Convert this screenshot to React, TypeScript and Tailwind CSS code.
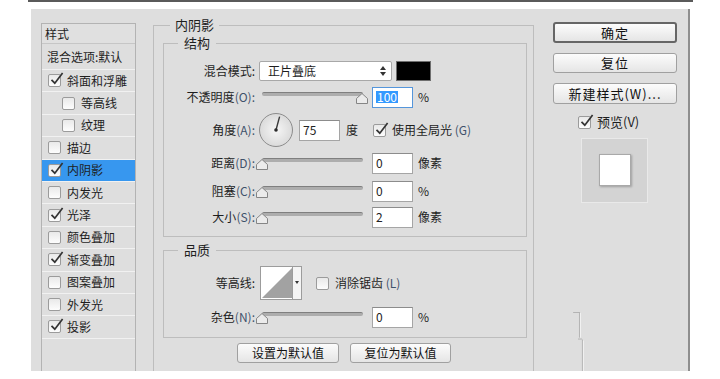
import React from 'react'

const ui = "font-['Noto_Sans_CJK_SC','Noto_Sans',sans-serif]"

function Box({ on }: { on?: boolean }) {
  return (
    <span className="relative block w-[13px] h-[13px] shrink-0 rounded-[2px] border border-[#9b9b9b] bg-linear-to-b from-[#e9e9e9] to-[#fdfdfd]">
      {on && (
        <svg className="absolute left-[1px] top-[-3px]" width="14" height="14" viewBox="0 0 14 14">
          <path d="M1.5 7.8 L4.8 11.2 L12.6 1" fill="none" stroke="#333" strokeWidth="1.7" />
        </svg>
      )}
    </span>
  )
}

function Slider({ full }: { full?: boolean }) {
  return (
    <div className="relative w-[114px] h-[14px] shrink-0">
      <div className="absolute left-[6px] top-[2px] w-[101px] h-[4px] rounded-full bg-[#adadad] border-t border-[#7f7f7f]" />
      <svg
        className={`absolute top-[3px] ${full ? 'left-[100px]' : 'left-0'}`}
        width="12"
        height="11"
        viewBox="0 0 12 11"
      >
        <path d="M0.5 10.5 V5.5 L6 0.5 L11.5 5.5 V10.5 Z" fill="#ebebeb" stroke="#858585" />
      </svg>
    </div>
  )
}

function Num({ children, focus }: { children: React.ReactNode; focus?: boolean }) {
  return (
    <div
      className={`w-[41px] h-[21px] shrink-0 bg-white border flex items-center px-[3px] text-[12px] text-[#222] ${
        focus ? 'border-[#5596db]' : 'border-[#a5a5a5] border-t-[#8c8c8c]'
      }`}
    >
      {children}
    </div>
  )
}

function Label({ t, k }: { t: string; k?: string }) {
  return (
    <div className="w-[91px] shrink-0 text-right whitespace-nowrap">
      {t}
      {k ? <span className="text-[#3e526b]">({k}):</span> : ':'}
    </div>
  )
}

function Btn({ children, main, className }: { children: React.ReactNode; main?: boolean; className: string }) {
  return (
    <div
      className={`flex items-center justify-center rounded-[3px] bg-linear-to-b from-[#fcfcfc] to-[#e5e5e5] text-[#111] ${
        main ? 'border-2 border-[#666]' : 'border border-[#a0a0a0]'
      } ${className}`}
    >
      {children}
    </div>
  )
}

const layers = [
  { t: '斜面和浮雕', on: true },
  { t: '等高线', indent: true },
  { t: '纹理', indent: true },
  { t: '描边' },
  { t: '内阴影', on: true, sel: true },
  { t: '内发光' },
  { t: '光泽', on: true },
  { t: '颜色叠加' },
  { t: '渐变叠加', on: true },
  { t: '图案叠加' },
  { t: '外发光' },
  { t: '投影', on: true },
]

export default function App() {
  return (
    <div className={`w-[720px] h-[379px] bg-white overflow-hidden text-[12px] text-[#1e1e1e] ${ui}`}>
      <div className="ml-[28px] w-[665px] h-[2px] bg-[#5a5a5a]" />

      <div className="ml-[31px] mt-[7px] w-[659px] h-[362px] bg-[#dedede] border-r-2 border-[#8e8e8e] overflow-hidden flex">
        {/* style list */}
        <div className="ml-[10px] mt-[14px] w-[95px] h-[360px] shrink-0 border border-[#b3b3b3]">
          <div className="h-[20px] flex items-center pl-[3px] border-b border-[#c6c6c6] bg-[#e0e0e0]">样式</div>
          <div className="h-[26px] flex items-center pl-[5px] border-b border-[#f1f1f1] whitespace-nowrap">
            混合选项:默认
          </div>
          {layers.map(l => (
            <div
              key={l.t}
              className={`h-[22.4px] flex items-center gap-[6px] border-b border-[#f1f1f1] ${
                l.indent ? 'pl-[20px]' : 'pl-[6px]'
              } ${l.sel ? 'bg-[#3797ef]' : ''}`}
            >
              <Box on={l.on} />
              <span>{l.t}</span>
            </div>
          ))}
        </div>

        {/* main settings */}
        <fieldset className="ml-[17px] mt-[8px] w-[381px] h-[370px] shrink-0 border border-[#bdbdbd] pl-[9px]">
          <legend className="ml-[7px] px-[5px] text-[13px] leading-[16px]">内阴影</legend>

          <fieldset className="mt-[2px] w-[364px] border border-[#bdbdbd] pb-[8px]">
            <legend className="ml-[14px] px-[6px] text-[13px] leading-[16px]">结构</legend>

            <div className="flex items-center h-[22px] mt-[9px]">
              <Label t="混合模式" />
              <div className="ml-[4px] w-[133px] h-[20px] bg-white border border-[#a8a8a8] rounded-[2px] flex items-center justify-between pl-[8px] pr-[5px]">
                <span>正片叠底</span>
                <svg width="6" height="10" viewBox="0 0 6 10">
                  <path d="M3 0 L6 4 L0 4 Z M0 6 L6 6 L3 10 Z" fill="#333" />
                </svg>
              </div>
              <div className="ml-[4px] w-[35px] h-[20px] bg-black border border-[#6e6e6e]" />
            </div>

            <div className="flex items-center h-[22px] mt-[4px]">
              <Label t="不透明度" k="O" />
              <div className="ml-[1px]">
                <Slider full />
              </div>
              <div className="ml-[2px]">
                <Num focus>
                  <span className="bg-[#3399ff] text-white px-[1px] leading-[12px]">100</span>
                </Num>
              </div>
              <span className="ml-[5px]">%</span>
            </div>

            <div className="flex items-center h-[36px] mt-[4px]">
              <Label t="角度" k="A" />
              <svg className="ml-[3px] shrink-0" width="36" height="36" viewBox="0 0 36 36">
                <defs>
                  <radialGradient id="dial" cx="50%" cy="50%" r="50%">
                    <stop offset="0%" stopColor="#f6f6f6" />
                    <stop offset="100%" stopColor="#dadada" />
                  </radialGradient>
                </defs>
                <circle cx="18" cy="18" r="16.5" fill="url(#dial)" stroke="#8c8c8c" />
                <line x1="18" y1="18" x2="21.6" y2="4.6" stroke="#3a3a3a" strokeWidth="1.4" />
                <circle cx="18" cy="18" r="1.8" fill="#2a2a2a" />
              </svg>
              <div className="ml-[5px]">
                <Num>75</Num>
              </div>
              <span className="ml-[6px]">度</span>
              <div className="ml-[15px]">
                <Box on />
              </div>
              <span className="ml-[6px] whitespace-nowrap">
                使用全局光 <span className="text-[#3e526b]">(G)</span>
              </span>
            </div>

            {[
              { t: '距离', k: 'D', v: '0', u: '像素', mt: 'mt-[4px]' },
              { t: '阻塞', k: 'C', v: '0', u: '%', mt: 'mt-[6px]' },
              { t: '大小', k: 'S', v: '2', u: '像素', mt: 'mt-[4px]' },
            ].map(r => (
              <div key={r.t} className={`flex items-center h-[22px] ${r.mt}`}>
                <Label t={r.t} k={r.k} />
                <div className="ml-[1px]">
                  <Slider />
                </div>
                <div className="ml-[2px]">
                  <Num>{r.v}</Num>
                </div>
                <span className="ml-[5px]">{r.u}</span>
              </div>
            ))}
          </fieldset>

          <fieldset className="mt-[5px] w-[364px] border border-[#bdbdbd] pb-[9px]">
            <legend className="ml-[14px] px-[6px] text-[13px] leading-[16px]">品质</legend>

            <div className="flex items-center h-[34px] mt-[8px]">
              <Label t="等高线" />
              <svg className="ml-[5px] shrink-0" width="42" height="34" viewBox="0 0 42 34">
                <rect x="0.5" y="0.5" width="41" height="33" fill="#fff" stroke="#9c9c9c" />
                <path d="M2 32 L32 2 L32 32 Z" fill="#a2a2a2" />
                <rect x="32.5" y="0.5" width="9" height="33" fill="#f4f4f4" stroke="#9c9c9c" />
                <path d="M35 15 L39 15 L37 18 Z" fill="#333" />
              </svg>
              <div className="ml-[14px]">
                <Box />
              </div>
              <span className="ml-[6px] whitespace-nowrap">
                消除锯齿 <span className="text-[#3e526b]">(L)</span>
              </span>
            </div>

            <div className="flex items-center h-[22px] mt-[6px]">
              <Label t="杂色" k="N" />
              <div className="ml-[1px]">
                <Slider />
              </div>
              <div className="ml-[2px]">
                <Num>0</Num>
              </div>
              <span className="ml-[5px]">%</span>
            </div>
          </fieldset>

          <div className="flex gap-[11px] mt-[5px] ml-[74px]">
            <Btn className="w-[102px] h-[20px]">设置为默认值</Btn>
            <Btn className="w-[101px] h-[20px]">复位为默认值</Btn>
          </div>
        </fieldset>

        {/* right column */}
        <div className="ml-[19px] mt-[13px] w-[124px] shrink-0 flex flex-col text-[13px]">
          <Btn main className="h-[21px] tracking-[1px]">确定</Btn>
          <Btn className="h-[20px] mt-[10px] tracking-[1px]">复位</Btn>
          <Btn className="h-[21px] mt-[10px] tracking-[1px]">新建样式(W)...</Btn>
          <div className="flex items-center h-[14px] mt-[11px] ml-[25px]">
            <Box on />
            <span className="ml-[6px]">预览(V)</span>
          </div>
          <div className="ml-[28px] mt-[9px] w-[67px] h-[66px] bg-[#d3d3d3] border border-[#e9e9e9] flex items-center justify-center">
            <div className="w-[32px] h-[32px] bg-white border border-[#a9a9a9] shadow-[1px_1px_2px_rgba(0,0,0,0.25)]" />
          </div>
          <svg className="ml-[19px] mt-[109px]" width="14" height="60" viewBox="0 0 14 60">
            <path d="M1 0.5 H8 M7.5 0 V26 M6 27.5 H10 M10.5 28 V60" fill="none" stroke="#b3b3b3" />
            <path d="M8.5 1 V26 M11.5 29 V60" fill="none" stroke="#f2f2f2" />
          </svg>
        </div>
      </div>
    </div>
  )
}
